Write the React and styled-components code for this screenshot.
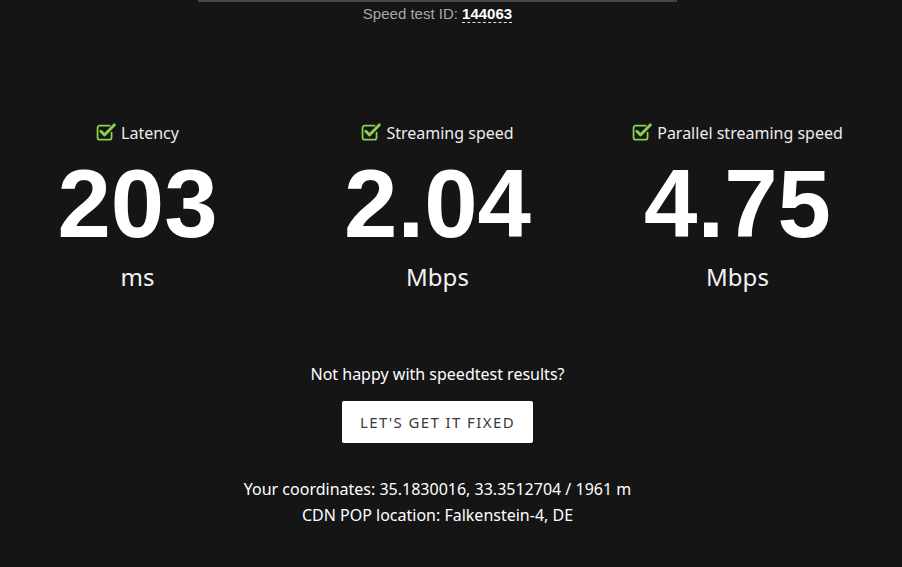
import React from 'react'
import styled, { createGlobalStyle } from 'styled-components'

const GlobalStyle = createGlobalStyle`
    html, body {
        margin: 0;
        padding: 0;
        background: #151515;
    }
    body {
        font-family: "Noto Sans", "Open Sans", sans-serif;
        color: #eee;
    }
`

const results = [
    { label: 'Latency', value: '203', unit: 'ms' },
    { label: 'Streaming speed', value: '2.04', unit: 'Mbps' },
    { label: 'Parallel streaming speed', value: '4.75', unit: 'Mbps' },
]

function CheckIcon() {
    return (
        <svg width="20" height="20" viewBox="0 0 18 18" fill="none">
            <path
                d="M14 9.5v4.4a2 2 0 0 1-2 2H3.4a2 2 0 0 1-2-2V5.3a2 2 0 0 1 2-2h8.8"
                stroke="#8bd150"
                strokeWidth="1.6"
                strokeLinecap="round"
            />
            <path
                d="M4.4 8.4l3.2 3.2L16.4 2.6"
                stroke="#8bd150"
                strokeWidth="2.6"
                strokeLinecap="round"
                strokeLinejoin="round"
            />
        </svg>
    )
}

function Stat({ label, value, unit }) {
    return (
        <Column>
            <Label>
                <CheckIcon />
                <span>{label}</span>
            </Label>
            <Value>{value}</Value>
            <Unit>{unit}</Unit>
        </Column>
    )
}

export default function App() {
    return (
        <>
            <GlobalStyle />
            <Page>
                <TopBar />
                <TestId>
                    Speed test ID: <IdLink>144063</IdLink>
                </TestId>
                <Stats>
                    {results.map(r => (
                        <Stat key={r.label} {...r} />
                    ))}
                </Stats>
                <Question>Not happy with speedtest results?</Question>
                <FixButton>LET'S GET IT FIXED</FixButton>
                <Info>
                    <p>Your coordinates: 35.1830016, 33.3512704 / 1961 m</p>
                    <p>CDN POP location: Falkenstein-4, DE</p>
                </Info>
            </Page>
        </>
    )
}

const Page = styled.div`
    width: 875px;
    display: flex;
    flex-direction: column;
    align-items: center;
    min-height: 567px;
`

const TopBar = styled.div`
    width: 479px;
    height: 2px;
    background: #454545;
`

const TestId = styled.div`
    margin-top: 2px;
    font-family: "Liberation Sans", Arial, sans-serif;
    font-size: 15px;
    line-height: 20px;
    color: #a8a8a8;
`

const IdLink = styled.span`
    color: #fff;
    font-weight: 700;
    border-bottom: 1px dashed #ddd;
`

const Stats = styled.div`
    margin-top: 99px;
    display: flex;
    justify-content: center;
    gap: 40px;
`

const Column = styled.div`
    width: 260px;
    display: flex;
    flex-direction: column;
    align-items: center;
`

const Label = styled.div`
    display: flex;
    align-items: center;
    gap: 5px;
    font-size: 16px;
    line-height: 20px;
    color: #ececec;

    svg {
        margin-top: -3px;
    }
`

const Value = styled.div`
    margin-top: 13px;
    font-family: "Liberation Sans", Arial, sans-serif;
    font-weight: 700;
    font-size: 96px;
    line-height: 96px;
    color: #fff;
`

const Unit = styled.div`
    margin-top: 10px;
    font-size: 24px;
    line-height: 30px;
    color: #f2f2f2;
`

const Question = styled.div`
    margin-top: 72px;
    font-size: 16px;
    line-height: 20px;
    color: #fff;
`

const FixButton = styled.button`
    margin-top: 17px;
    width: 191px;
    height: 42px;
    background: #fff;
    border: none;
    border-radius: 2px;
    font-family: "Noto Sans", "Open Sans", sans-serif;
    font-size: 15px;
    letter-spacing: 1.4px;
    color: #3a3a3a;
    cursor: pointer;
`

const Info = styled.div`
    margin-top: 33px;
    text-align: center;
    font-size: 16px;
    line-height: 26px;
    color: #fff;

    p {
        margin: 0;
    }
`
